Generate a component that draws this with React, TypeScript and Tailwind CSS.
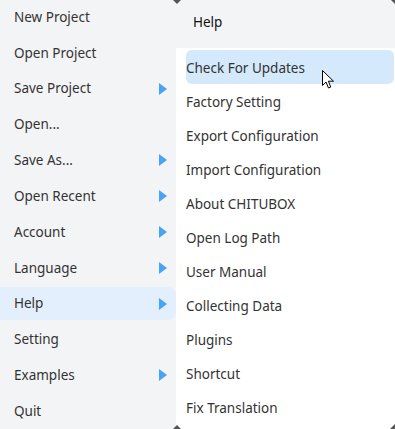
import React from "react";

const leftItems: { label: string; sub?: boolean; active?: boolean }[] = [
  { label: "New Project" },
  { label: "Open Project" },
  { label: "Save Project", sub: true },
  { label: "Open..." },
  { label: "Save As...", sub: true },
  { label: "Open Recent", sub: true },
  { label: "Account", sub: true },
  { label: "Language", sub: true },
  { label: "Help", sub: true, active: true },
  { label: "Setting" },
  { label: "Examples", sub: true },
  { label: "Quit" },
];

const helpItems = [
  "Check For Updates",
  "Factory Setting",
  "Export Configuration",
  "Import Configuration",
  "About CHITUBOX",
  "Open Log Path",
  "User Manual",
  "Collecting Data",
  "Plugins",
  "Shortcut",
  "Fix Translation",
];

function Arrow() {
  return (
    <svg width="8" height="12" viewBox="0 0 8 12" className="shrink-0">
      <path d="M0 0 L8 6 L0 12 Z" fill="#4aa3f2" />
    </svg>
  );
}

function Cursor() {
  return (
    <svg width="13" height="19" viewBox="0 0 13 19" className="absolute left-[322px] top-[70px]">
      <path
        d="M0.5 0.5 L0.5 15.5 L4 12 L6.5 18 L8.8 17 L6.4 11.2 L11.5 11.2 Z"
        fill="#fff"
        stroke="#000"
        strokeWidth="1"
        strokeLinejoin="round"
      />
    </svg>
  );
}

export default function App() {
  return (
    <div
      className="relative w-[395px] h-[429px] overflow-hidden bg-[#f3f4f6] text-[13.5px] text-[#333]"
      style={{ fontFamily: '"Noto Sans", "Open Sans", sans-serif' }}
    >
      <div className="flex h-full">
        {/* Main menu */}
        <div className="w-[176px] shrink-0 flex flex-col -mt-px">
          {leftItems.map((it) => (
            <div key={it.label} className="h-[36px] flex items-center">
              <div
                className={`w-full h-[33px] flex items-center justify-between pl-[14px] pr-[9px] rounded-r-lg ${
                  it.active ? "bg-[#e3effc]" : ""
                }`}
              >
                <span>{it.label}</span>
                {it.sub && <Arrow />}
              </div>
            </div>
          ))}
        </div>

        {/* Submenu */}
        <div className="flex-1 flex flex-col">
          <div className="h-[48px] flex items-center pl-[17px] pb-[3px] text-[#111]">Help</div>
          <div className="flex-1 bg-white pl-[10px] pr-px pt-[2px]">
            {helpItems.map((h, i) => (
              <div
                key={h}
                className={`h-[34px] flex items-center pt-[2px] rounded-md ${
                  i === 0 ? "bg-[#d4e9fb]" : ""
                }`}
              >
                {h}
              </div>
            ))}
          </div>
        </div>
      </div>

      {/* resize corner marks */}
      <div className="absolute left-[173px] top-0 w-0 h-0 border-l-[4px] border-r-[4px] border-t-[4px] border-l-transparent border-r-transparent border-t-[#555]" />
      <div className="absolute right-0 top-0 w-0 h-0 border-l-[4px] border-b-[4px] border-l-transparent border-b-transparent border-t-[4px] border-t-[#555]" />
      <div className="absolute left-[173px] bottom-0 w-0 h-0 border-l-[4px] border-r-[4px] border-b-[4px] border-l-transparent border-r-transparent border-b-[#555]" />
      <div className="absolute right-0 bottom-0 w-0 h-0 border-l-[5px] border-l-transparent border-b-[5px] border-b-[#555]" />

      <Cursor />
    </div>
  );
}
